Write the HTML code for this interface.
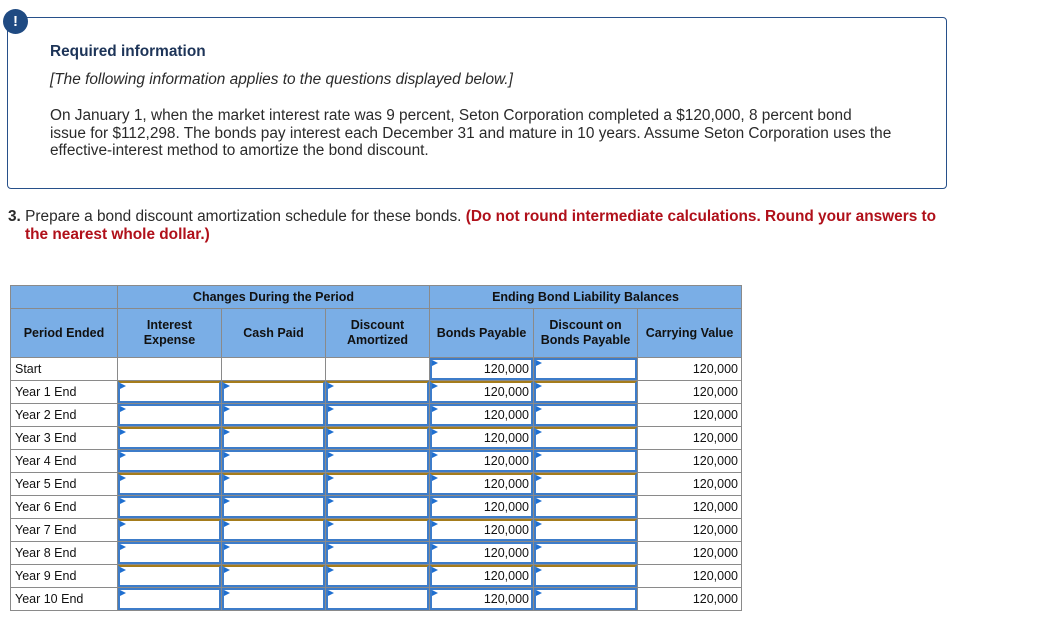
<!DOCTYPE html>
<html><head><meta charset="utf-8"><style>
body{margin:0;width:1060px;height:630px;background:#fff;position:relative;font-family:"Liberation Sans",sans-serif;overflow:hidden}
.box{position:absolute;left:7px;top:17px;width:938px;height:170px;border:1px solid #27508a;border-radius:4px}
.ic{position:absolute;left:3px;top:9px;width:25px;height:25px;border-radius:50%;background:#1f4a82;color:#fff;font-weight:bold;font-size:15px;text-align:center;line-height:25px}
.t{position:absolute;color:#2a2a2a;font-size:15.4px;line-height:17.7px}
table{position:absolute;left:10px;top:285px;border-collapse:collapse;table-layout:fixed;width:731px;font-size:12.5px;color:#111}
td{border:1px solid #8a8a8a;padding:0;height:22px;overflow:hidden}
th{border:1px solid #8a8a8a;background:#7aaee6;font-weight:bold;font-size:12.5px;color:#111;padding:0;line-height:15px}
td.l{padding-left:4px}
td.r{text-align:right;padding-right:3px}
.in{position:relative;box-sizing:border-box;height:22px;border:2px solid #3d7cc9;text-align:right;padding-right:2px;line-height:18px}
.g .in{border-top-color:#a57c1b}
.in:before{content:"";position:absolute;left:0;top:0;border-left:6px solid #1f6fd0;border-top:3px solid transparent;border-bottom:3px solid transparent}
</style></head><body>
<div class="box"></div>
<div class="ic">!</div>
<div class="t" style="left:50px;top:43px;font-weight:bold;color:#1d3458">Required information</div>
<div class="t" style="left:50px;top:71px;font-style:italic">[The following information applies to the questions displayed below.]</div>
<div class="t" style="left:50px;top:107px;width:870px">On January 1, when the market interest rate was 9 percent, Seton Corporation completed a $120,000, 8 percent bond<br>issue for $112,298. The bonds pay interest each December 31 and mature in 10 years. Assume Seton Corporation uses the<br>effective-interest method to amortize the bond discount.</div>
<div class="t" style="left:8px;top:208px;width:990px;white-space:nowrap"><b>3.</b> Prepare a bond discount amortization schedule for these bonds. <b style="color:#b0101a">(Do not round intermediate calculations. Round your answers to</b></div>
<div class="t" style="left:25px;top:226px"><b style="color:#b0101a">the nearest whole dollar.)</b></div>
<table>
<colgroup><col style="width:107px"><col style="width:104px"><col style="width:104px"><col style="width:104px"><col style="width:104px"><col style="width:104px"><col style="width:104px"></colgroup>
<tr style="height:23px"><th></th><th colspan="3">Changes During the Period</th><th colspan="3">Ending Bond Liability Balances</th></tr>
<tr style="height:49px"><th>Period Ended</th><th>Interest<br>Expense</th><th>Cash Paid</th><th>Discount<br>Amortized</th><th>Bonds Payable</th><th>Discount on<br>Bonds Payable</th><th>Carrying Value</th></tr>
<tr><td class="l">Start</td><td></td><td></td><td></td><td><div class="in">120,000</div></td><td><div class="in"></div></td><td class="r">120,000</td></tr>
<tr class="g"><td class="l">Year 1 End</td><td><div class="in"></div></td><td><div class="in"></div></td><td><div class="in"></div></td><td><div class="in">120,000</div></td><td><div class="in"></div></td><td class="r">120,000</td></tr>
<tr><td class="l">Year 2 End</td><td><div class="in"></div></td><td><div class="in"></div></td><td><div class="in"></div></td><td><div class="in">120,000</div></td><td><div class="in"></div></td><td class="r">120,000</td></tr>
<tr class="g"><td class="l">Year 3 End</td><td><div class="in"></div></td><td><div class="in"></div></td><td><div class="in"></div></td><td><div class="in">120,000</div></td><td><div class="in"></div></td><td class="r">120,000</td></tr>
<tr><td class="l">Year 4 End</td><td><div class="in"></div></td><td><div class="in"></div></td><td><div class="in"></div></td><td><div class="in">120,000</div></td><td><div class="in"></div></td><td class="r">120,000</td></tr>
<tr class="g"><td class="l">Year 5 End</td><td><div class="in"></div></td><td><div class="in"></div></td><td><div class="in"></div></td><td><div class="in">120,000</div></td><td><div class="in"></div></td><td class="r">120,000</td></tr>
<tr><td class="l">Year 6 End</td><td><div class="in"></div></td><td><div class="in"></div></td><td><div class="in"></div></td><td><div class="in">120,000</div></td><td><div class="in"></div></td><td class="r">120,000</td></tr>
<tr class="g"><td class="l">Year 7 End</td><td><div class="in"></div></td><td><div class="in"></div></td><td><div class="in"></div></td><td><div class="in">120,000</div></td><td><div class="in"></div></td><td class="r">120,000</td></tr>
<tr><td class="l">Year 8 End</td><td><div class="in"></div></td><td><div class="in"></div></td><td><div class="in"></div></td><td><div class="in">120,000</div></td><td><div class="in"></div></td><td class="r">120,000</td></tr>
<tr class="g"><td class="l">Year 9 End</td><td><div class="in"></div></td><td><div class="in"></div></td><td><div class="in"></div></td><td><div class="in">120,000</div></td><td><div class="in"></div></td><td class="r">120,000</td></tr>
<tr><td class="l">Year 10 End</td><td><div class="in"></div></td><td><div class="in"></div></td><td><div class="in"></div></td><td><div class="in">120,000</div></td><td><div class="in"></div></td><td class="r">120,000</td></tr>
</table>
</body></html>
